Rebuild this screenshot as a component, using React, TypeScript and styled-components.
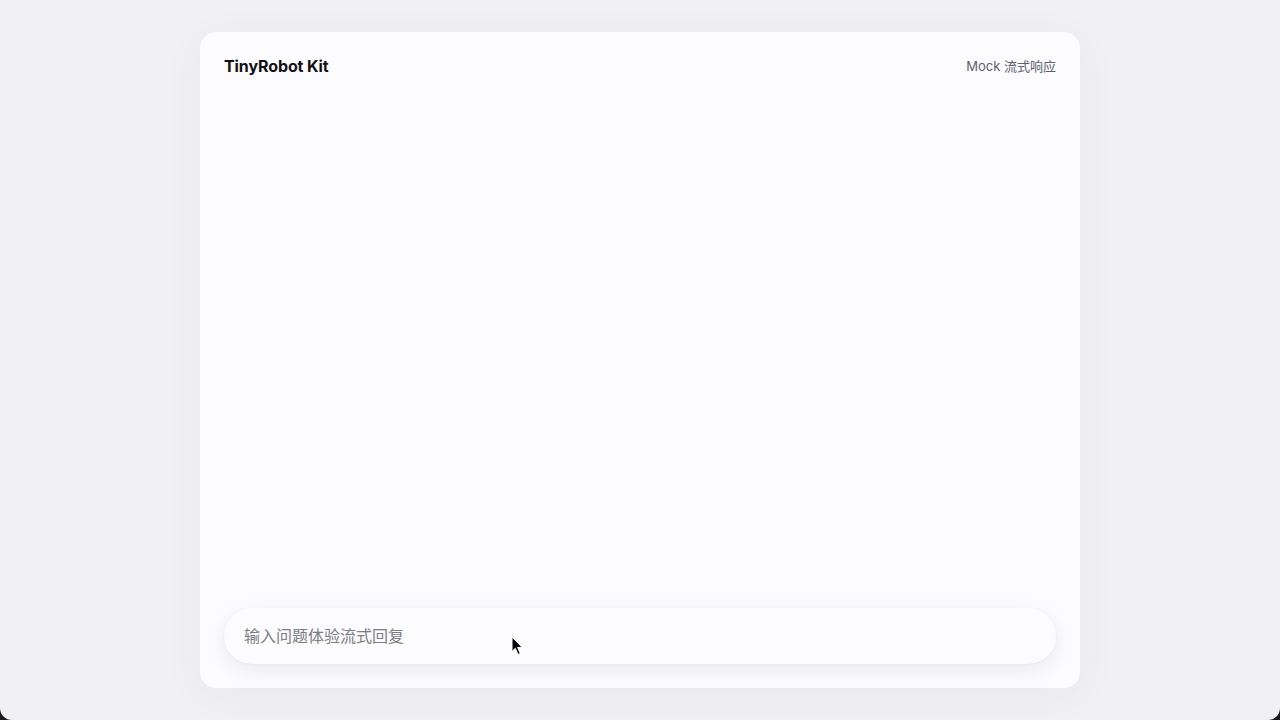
import React from "react";
import styled, { createGlobalStyle } from "styled-components";

const Global = createGlobalStyle`
  html, body { margin: 0; padding: 0; height: 720px; overflow: hidden; background: #1a1a1a; }
  #root { height: 720px; }
  * { box-sizing: border-box; }
`;

const Screen = styled.div`
  position: relative;
  height: 720px;
  background: #f1f1f5;
  border-radius: 0 0 12px 12px;
  display: flex;
  justify-content: center;
  padding-top: 32px;
  font-family: Inter, "Noto Sans CJK SC", sans-serif;
`;

const RightCorner = styled.div`
  position: absolute;
  right: 0;
  bottom: 0;
  width: 12px;
  height: 12px;
  background: #c9c9cc;
  z-index: -1;
`;

const Card = styled.div`
  width: 880px;
  height: 656px;
  background: #fcfbfe;
  border-radius: 16px;
  box-shadow: 0 8px 40px rgba(40, 40, 80, 0.05);
  padding: 24px;
  display: flex;
  flex-direction: column;
`;

const Header = styled.header`
  display: flex;
  align-items: center;
  justify-content: space-between;
  height: 20px;
`;

const Title = styled.h1`
  margin: 0;
  font-size: 16px;
  line-height: 20px;
  font-weight: 700;
  color: #111114;
  letter-spacing: -0.1px;
`;

const Badge = styled.span`
  font-size: 13px;
  line-height: 20px;
  color: #5e6170;
`;

const Messages = styled.div`
  flex: 1;
`;

const InputBar = styled.div`
  position: relative;
  height: 56px;
  border-radius: 28px;
  background: #fcfbfe;
  box-shadow: 0 6px 20px rgba(30, 30, 60, 0.08), 0 1px 3px rgba(30, 30, 60, 0.03);
  display: flex;
  align-items: center;
  padding: 0 18px;
`;

const Input = styled.input`
  border: none;
  outline: none;
  background: transparent;
  width: 100%;
  font-family: Inter, "Noto Sans CJK SC", sans-serif;
  font-size: 16px;
  color: #333;
  &::placeholder { color: #7d7d84; }
`;

const Cursor = styled.svg`
  position: absolute;
  left: 287px;
  top: 28px;
  pointer-events: none;
`;

export default function App() {
  return (
    <>
      <Global />
      <Screen>
        <RightCorner />
        <Card>
          <Header>
            <Title>TinyRobot Kit</Title>
            <Badge>Mock 流式响应</Badge>
          </Header>
          <Messages />
          <InputBar>
            <Input placeholder="输入问题体验流式回复" />
            <Cursor width="13" height="20" viewBox="0 0 13 20">
              <path d="M1 1 L1 15.5 L4.3 12.3 L7 18.5 L9.3 17.5 L6.6 11.4 L11.2 11.4 Z" fill="#000" stroke="#fff" strokeWidth="1" />
            </Cursor>
          </InputBar>
        </Card>
      </Screen>
    </>
  );
}
